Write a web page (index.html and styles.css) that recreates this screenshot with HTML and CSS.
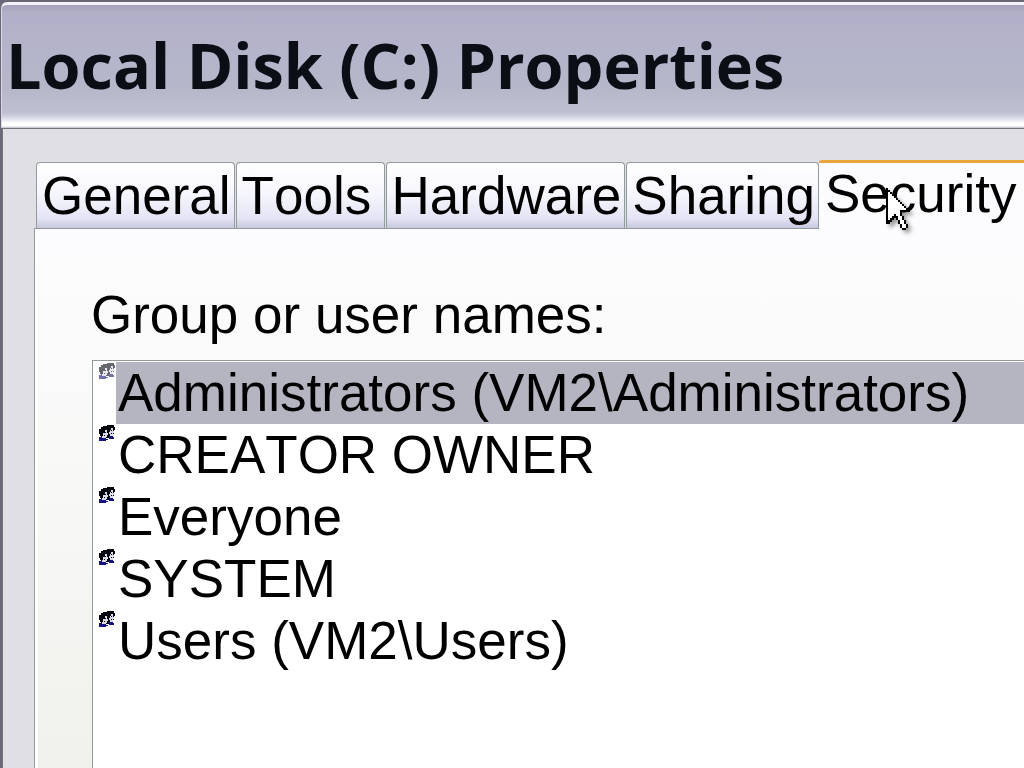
FILE: index.html
```html
<!DOCTYPE html>
<html lang="en">
<head>
  <meta charset="UTF-8" />
  <meta name="viewport" content="width=device-width, initial-scale=1.0"/>
  <title>Local Disk (C:) Properties</title>
  <link rel="stylesheet" href="styles.css">
</head>
<body>
  <!-- shared icon: two heads, one behind the other -->
  <svg class="defs" aria-hidden="true">
    <symbol id="users" viewBox="0 0 17 17">
      <path class="hair" d="M3 3h2V2h4V1h7v2h1v3h-1v4h-1v2h-4v2H3v-2H2v-2H1V5h2z"/>
      <path class="face" d="M7 6h2v3h1v2H9v2H8v1H4v-2h1V9h2zM13 4h2v3h1v2h-1v3h-3v-2h-1V8h1V6h1z"/>
      <path class="hair" d="M7 8h1v1H7zM13 6h1v1h-1zM6 11h1v1H6zM13 9h1v1h-1z"/>
      <path class="shirt" d="M1 13h3v1h4v1h2v1H8v1H1zM11 12h4v1h1v2h-5z"/>
    </symbol>
  </svg>

  <div class="window">
    <header class="titlebar">
      <h1>Local Disk (C:) Properties</h1>
    </header>

    <main class="dialog">
      <div class="tabs" role="tablist">
        <button class="tab" role="tab">General</button>
        <button class="tab" role="tab">Tools</button>
        <button class="tab" role="tab">Hardware</button>
        <button class="tab" role="tab">Sharing</button>
        <button class="tab active" role="tab" aria-selected="true">
          Security
          <svg class="pointer" viewBox="0 0 12 21" aria-hidden="true" shape-rendering="crispEdges">
            <path fill="#000" d="M0 0h1v1h1v1h1v1h1v1h1v1h1v1h1v1h1v1h1v1h1v1h1v1h1v1H8v2h1v2h1v2h1v2h-1v1H8v-1H7v-2H6v-2H5v-1H4v1H3v1H2v1H0z"/>
            <path fill="#fff" d="M1 2h1v1h1v1h1v1h1v1h1v1h1v1h1v1h1v1h1v1H7v3h1v2h1v2h1v2H8v-2H7v-2H6v-2H5v-1H4v1H3v1H2v1H1z"/>
          </svg>
        </button>
      </div>

      <section class="panel" role="tabpanel">
        <h2 id="names">Group or user names:</h2>
        <ul class="list" role="listbox" aria-labelledby="names">
          <li class="selected" role="option" aria-selected="true"><svg class="icon"><use href="#users"/></svg><span>Administrators (VM2\Administrators)</span></li>
          <li role="option"><svg class="icon"><use href="#users"/></svg><span>CREATOR OWNER</span></li>
          <li role="option"><svg class="icon"><use href="#users"/></svg><span>Everyone</span></li>
          <li role="option"><svg class="icon"><use href="#users"/></svg><span>SYSTEM</span></li>
          <li role="option"><svg class="icon"><use href="#users"/></svg><span>Users (VM2\Users)</span></li>
        </ul>
      </section>
    </main>
  </div>
</body>
</html>
```
FILE: styles.css
```css
:root {
  --edge: #6b6878;
  --line: #919b9c;
  --face: #e0dfe3;
}

* {
  margin: 0;
  padding: 0;
  box-sizing: border-box;
}

body {
  background-color: var(--edge);
  color: #000;
  font-family: "Liberation Sans", Arial, sans-serif;
  font-size: 53px;
  font-kerning: none;
  overflow: hidden;
}

.defs {
  display: none;
}

.window {
  display: flex;
  flex-direction: column;
  min-height: 100vh;
  padding: 2px 0 0 1px;
}

.titlebar {
  height: 126px;
  padding: 22px 4px 0;
  border-top: 3px solid #f4f4fa;
  border-left: 1px solid #d8d8e6;
  border-top-left-radius: 6px;
  background: linear-gradient(#a5a4ba, #b1b0c8 8px, #b4b4cb 50px, #b7b7ca 84px, #bfc0d2 108px, #d8dae8 113px, #fff 118px, #fff 121px, #b9b9c0);
}

.titlebar h1 {
  color: #0b0e15;
  font: bold 63px/76px "Open Sans", "Trebuchet MS", sans-serif;
  white-space: nowrap;
}

.dialog {
  flex: 1;
  display: flex;
  flex-direction: column;
  padding: 31px 0 0 31px;
  margin-left: 1px;
  border-top: 1px solid #77747f;
  border-left: 1px solid #77747f;
  background: var(--face);
}

.tabs {
  display: flex;
  align-items: flex-end;
  gap: 1px;
  height: 68px;
  padding-left: 2px;
}

.tab {
  flex: none;
  min-width: 149px;
  height: 66px;
  padding: 0 3px 0 5px;
  border: 1px solid var(--line);
  border-bottom-width: 0;
  border-radius: 4px 4px 0 0;
  background: linear-gradient(#fff, #f5f5fd 50%, #e4e4f5 85%, #c8c8de);
  color: inherit;
  font: inherit;
  line-height: 66px;
  text-align: left;
}

.tab.active {
  position: relative;
  flex: 1;
  height: 69px;
  margin: 0 0 -1px -1px;
  padding: 0 6px;
  border: 0;
  border-top: 3px solid #e9a53c;
  border-radius: 3px 0 0 0;
  background: #fcfcfe;
  line-height: 60px;
  padding-bottom: 4px;
}

.pointer {
  position: absolute;
  left: 67px;
  top: 25px;
  width: 24px;
  height: 42px;
  filter: drop-shadow(3px 3px 2px rgba(0, 0, 0, 0.4));
}

.panel {
  flex: 1;
  display: flex;
  flex-direction: column;
  padding: 55px 0 0 54px;
  border: 1px solid var(--line);
  border-width: 1px 0 0 1px;
  background: linear-gradient(90deg, #fff 3px, transparent 3px), linear-gradient(#fcfcfe, #f9f9f8 40%, #f0f0ec);
}

.panel h2 {
  padding-left: 2px;
  font-size: inherit;
  font-weight: normal;
  line-height: 62px;
}

.list {
  flex: 1;
  margin: 14px 0 0 3px;
  padding-top: 1px;
  border: 1px solid var(--line);
  border-width: 1px 0 0 1px;
  background: #fff;
  list-style: none;
}

.list li {
  display: flex;
  align-items: flex-start;
  padding-left: 5px;
  line-height: 62px;
  white-space: nowrap;
}

.list span {
  flex: 1;
  padding-left: 2px;
}

.icon {
  flex: none;
  width: 17px;
  height: 17px;
  margin-right: 1px;
}

.hair {
  fill: #050510;
}

.face {
  fill: #dcdce8;
}

.shirt {
  fill: #14147c;
}

.selected span {
  background: #b4b5c1;
}

.selected .icon {
  opacity: 0.6;
}
```
